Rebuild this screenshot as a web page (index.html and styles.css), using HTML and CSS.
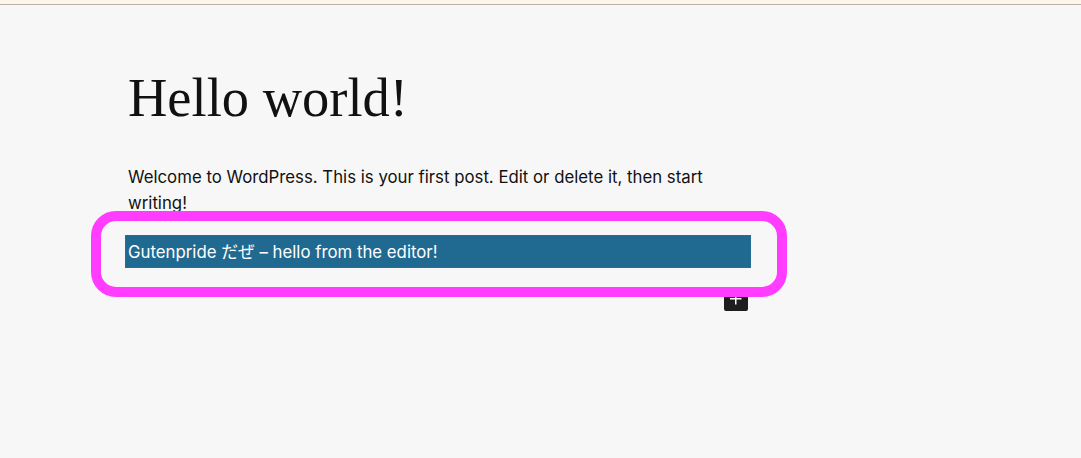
FILE: index.html
```html
<!DOCTYPE html>
<html lang="en">
<head>
<meta charset="utf-8">
<title>Hello world!</title>
<link rel="stylesheet" href="styles.css">
</head>
<body>
<div class="topbar"></div>
<main class="canvas">
  <article class="post">
    <h1 class="post-title">Hello world!</h1>
    <p class="post-text">Welcome to WordPress. This is your first post. Edit or delete it, then start writing!</p>
    <div class="block-wrap">
      <p class="gp-block">Gutenpride だぜ – hello from the editor!</p>
      <div class="inserter-row">
        <button class="inserter" type="button" aria-label="Add block">
          <svg width="24" height="24" viewBox="0 0 24 24"><path d="M11 12.5V17.5H12.5V12.5H17.5V11H12.5V6H11V11H6V12.5H11Z" fill="#fff"/></svg>
        </button>
      </div>
      <div class="highlight"></div>
    </div>
  </article>
</main>
</body>
</html>
```
FILE: styles.css
```css
html, body {
  margin: 0;
  padding: 0;
}
body {
  background: #f7f7f7;
  width: 1081px;
  height: 458px;
  overflow: hidden;
  font-family: Inter, "Noto Sans CJK JP", sans-serif;
  color: #111;
}
.topbar {
  height: 4px;
  background: #fcf6e8;
  border-bottom: 1px solid #b9b2a4;
}
.canvas {
  padding: 0 0 0 128px;
}
.post {
  width: 620px;
}
.post-title {
  font-family: "Liberation Serif", "Times New Roman", serif;
  font-weight: 400;
  font-size: 54.5px;
  line-height: 1.2;
  margin: 0;
  padding-top: 60px;
  color: #111;
}
.post-text {
  margin: 34px 0 0;
  font-size: 16.8px;
  line-height: 26px;
  color: #111;
}
.block-wrap {
  position: relative;
  margin-top: 19px;
}
.gp-block {
  margin: 0 -3px;
  padding: 4px 3px 3px;
  background: #206a92;
  color: #fff;
  font-size: 16.8px;
  line-height: 26px;
  outline: 1px dotted rgba(200, 60, 80, 0.6);
  outline-offset: -1px;
}
.inserter-row {
  display: flex;
  justify-content: flex-end;
  margin-top: 19px;
}
.inserter {
  width: 24px;
  height: 24px;
  padding: 0;
  border: 0;
  border-radius: 2px;
  background: #1e1e1e;
  display: flex;
  align-items: center;
  justify-content: center;
}
.highlight {
  position: absolute;
  left: -37px;
  top: -24px;
  width: 676px;
  height: 66px;
  border: 10px solid #ff3cff;
  border-radius: 25px;
  pointer-events: none;
}
```
